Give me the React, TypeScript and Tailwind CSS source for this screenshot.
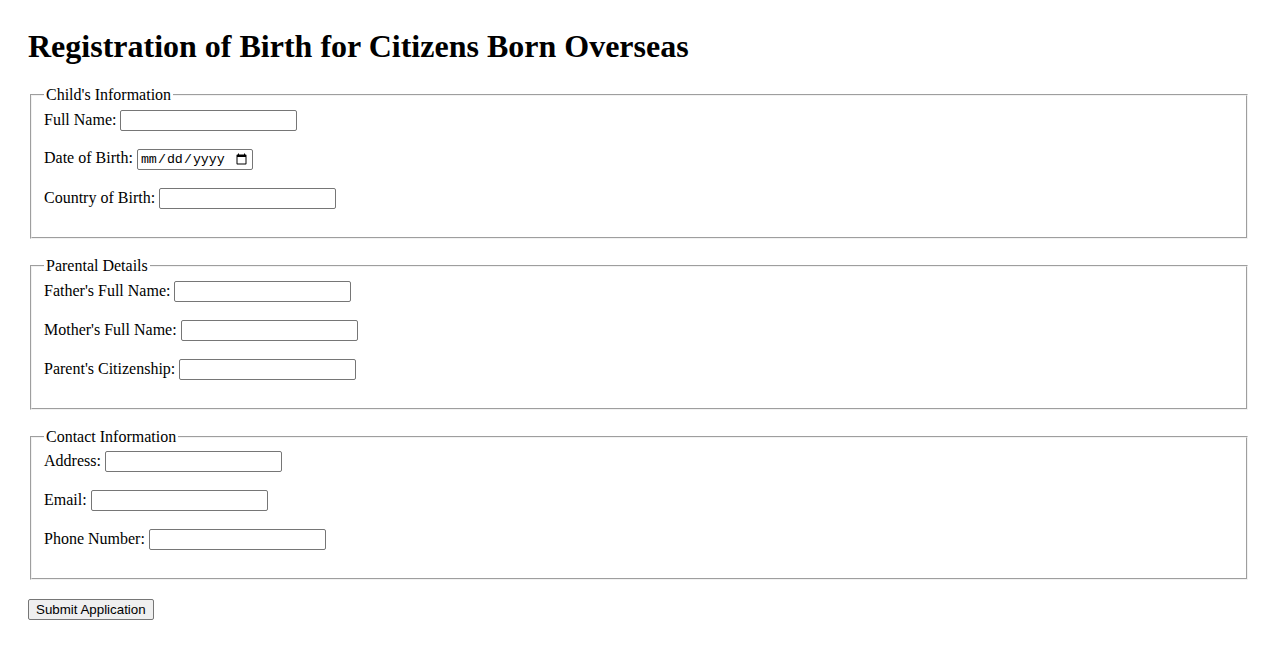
import React from "react";

const inputCls =
  "box-border w-[177px] h-[21px] border border-[#767676] rounded-[2px] bg-white px-[2px] py-[1px] text-[13.333px] font-['Liberation_Sans',Arial,sans-serif] align-baseline";

function Row({ label, type = "text" }: { label: string; type?: string }) {
  return (
    <div className="mb-[18px] [line-height:normal]">
      <label>{label}</label>{" "}
      {type === "date" ? (
        <input
          type="date"
          className="box-border w-[116px] h-[21px] border border-[#767676] rounded-[2px] bg-white px-[2px] py-[1px] text-[13.333px] font-['Liberation_Mono',monospace] align-baseline"
        />
      ) : (
        <input type={type} className={inputCls} />
      )}
    </div>
  );
}

function Section({ title, children }: { title: string; children: React.ReactNode }) {
  return (
    <fieldset className="mx-[2px] mb-[18px] border-2 [border-style:groove] border-[#f2f2f2] px-[12px] pt-[5.6px] pb-[10px]">
      <legend className="px-[2px] [line-height:normal]">{title}</legend>
      {children}
    </fieldset>
  );
}

export default function App() {
  return (
    <div className="bg-white text-black font-['Liberation_Serif','Times_New_Roman',serif] text-[16px] [line-height:normal] px-[28px] pt-[28px] pb-[28px] min-h-[650px]">
      <h1 className="text-[32px] font-bold mb-[21.44px] [line-height:normal]">
        Registration of Birth for Citizens Born Overseas
      </h1>
      <form>
        <Section title="Child's Information">
          <Row label="Full Name:" />
          <Row label="Date of Birth:" type="date" />
          <Row label="Country of Birth:" />
        </Section>
        <Section title="Parental Details">
          <Row label="Father's Full Name:" />
          <Row label="Mother's Full Name:" />
          <Row label="Parent's Citizenship:" />
        </Section>
        <Section title="Contact Information">
          <Row label="Address:" />
          <Row label="Email:" type="email" />
          <Row label="Phone Number:" type="tel" />
        </Section>
        <button
          type="submit"
          className="box-border h-[21px] mt-[1px] bg-[#efefef] border border-[#767676] rounded-[2px] px-[7px] py-[1px] text-[13.333px] font-['Liberation_Sans',Arial,sans-serif] text-black [line-height:normal]"
        >
          Submit Application
        </button>
      </form>
    </div>
  );
}
